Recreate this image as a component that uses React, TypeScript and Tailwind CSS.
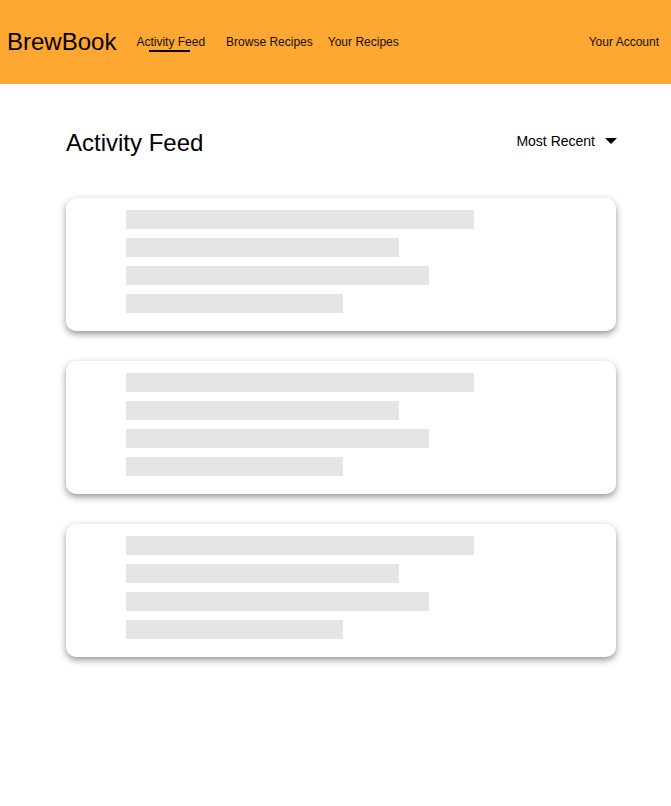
import React from "react";

const bars = [348, 273, 303, 217];

function Card() {
  return (
    <div className="w-[550px] rounded-[10px] bg-white pl-[60px] pt-[12px] pb-[18px] shadow-[0_3px_7px_rgba(0,0,0,0.42)] flex flex-col gap-[9px]">
      {bars.map((w, i) => (
        <div key={i} className="h-[19px] bg-[#e5e5e5]" style={{ width: w }} />
      ))}
    </div>
  );
}

export default function App() {
  return (
    <div className="min-h-[806px] bg-white text-black" style={{ fontFamily: '"Liberation Sans", Arial, sans-serif' }}>
      <header className="h-[84px] bg-[#ffa733] flex items-center pl-[7px] pr-[12px]">
        <div className="text-[24px] leading-[1.15]">BrewBook</div>
        <nav className="flex items-center ml-[20px] mt-[2px] text-[12px] leading-[1.15] text-[#111]">
          <span className="relative">
            Activity Feed
            <span className="absolute left-[13px] top-[calc(100%)] w-[41px] h-[2px] bg-black" />
          </span>
          <span className="ml-[21px]">Browse Recipes</span>
          <span className="ml-[15px]">Your Recipes</span>
        </nav>
        <div className="ml-auto mt-[2px] text-[12px] leading-[1.15] text-[#111]">Your Account</div>
      </header>
      <main className="pl-[66px] pt-[45px]">
        <div className="w-[551px] flex items-center justify-between">
          <h1 className="text-[24px] leading-[1.15]">Activity Feed</h1>
          <div className="flex items-center text-[14px] leading-[1.15] mb-[3px]">
            <span>Most Recent</span>
            <span className="ml-[10px] w-0 h-0 border-l-[6px] border-r-[6px] border-t-[6px] border-l-transparent border-r-transparent border-t-black" />
          </div>
        </div>
        <div className="mt-[41px] flex flex-col gap-[30px]">
          <Card />
          <Card />
          <Card />
        </div>
      </main>
    </div>
  );
}
